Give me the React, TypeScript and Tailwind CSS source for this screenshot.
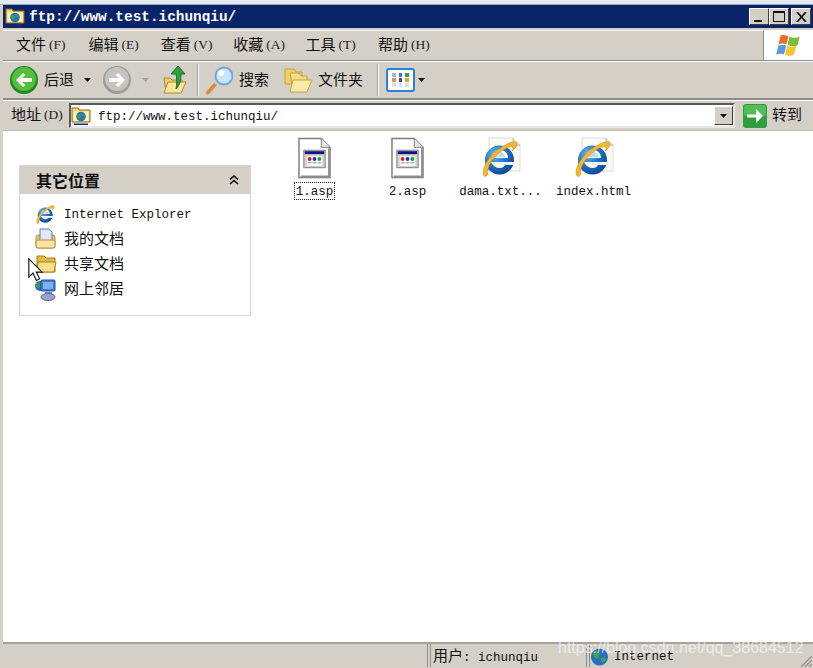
import React from 'react';

const mono = "font-['Liberation_Mono','Noto_Sans_CJK_SC',monospace]";

// latin at 12.5px, CJK at 15px, so each run keeps the old bitmap-font proportions
function Label({ text, className = '' }: { text: string; className?: string }) {
  const parts = text.match(/[\u4e00-\u9fff]+|[^\u4e00-\u9fff]+/g) || [];
  return (
    <span className={`${mono} whitespace-pre leading-none text-[#111] ${className}`}>
      {parts.map((p, i) =>
        /[\u4e00-\u9fff]/.test(p) ? (
          <span key={i} className="text-[15px] font-['Noto_Sans_CJK_SC',sans-serif]">{p}</span>
        ) : (
          <span key={i} className="text-[12.5px]">{p}</span>
        )
      )}
    </span>
  );
}

function Hotkey({ text, hotkey }: { text: string; hotkey: string }) {
  return (
    <span className="inline-flex items-center">
      <Label text={text} />
      <span className="font-['Liberation_Serif',serif] ml-[3px] text-[13.5px] leading-none text-[#222]">({hotkey})</span>
    </span>
  );
}

function FolderGlobe({ size = 20 }: { size?: number }) {
  return (
    <svg width={size} height={size} viewBox="0 0 20 20">
      <path d="M1 2h6l1 2h11v12H1z" fill="#f3d66e" stroke="#8a6d1f" />
      <rect x="2.500" y="5.500" width="15" height="9.500" fill="#fff3b8" />
      <circle cx="10" cy="10.500" r="4.800" fill="#2a6fc4" />
      <path d="M6 9c2-2 4-1 4 1s-2 3-3 2zM10 7c2 0 3 2 3 3l-2 0z" fill="#3aa544" />
      <rect x="3" y="17.500" width="14" height="1.500" fill="#1a2a6a" />
    </svg>
  );
}

function IEIcon({ size = 22, page = false }: { size?: number; page?: boolean }) {
  return (
    <svg width={size} height={size} viewBox="0 0 42 42">
      <defs>
        <radialGradient id="ieBlue" cx="0.35" cy="0.3" r="0.8">
          <stop offset="0" stopColor="#6fbcec" />
          <stop offset="0.5" stopColor="#1f74c4" />
          <stop offset="1" stopColor="#0b3f88" />
        </radialGradient>
      </defs>
      {page && <path d="M9 1h24l7 7v26H9z" fill="#fbfbf4" stroke="#dcdcdc" />}
      {page && <path d="M33 1v7h7" fill="#e4e4ee" stroke="#b5b5c0" />}
      <circle cx="19.500" cy="23" r="14.500" fill="url(#ieBlue)" />
      <path d="M12 21c0-5 3.500-8 8-8s8 3 8 8z" fill="#fff" />
      <path d="M15 20c0-3 2-5 5-5s5 2 5 5z" fill="#b9def5" />
      <path d="M11 25h24c-1 1-1 2-2 3H25c-1 2-3 3-5 3-4 0-7-2-9-6z" fill="#fff" />
      <path d="M14 26h20l-1 2H17z" fill="#e8f4fc" />
      <path d="M4 39C0 33 9 15 29 6c5-2 9-2 8 2-1 3-3 4-5 6 2-3 1-5-3-4C16 15 6 29 8 37c-1 2-3 3-4 2z" fill="#f2b632" stroke="#c98a12" strokeWidth="0.500" />
    </svg>
  );
}

function AspIcon() {
  return (
    <svg width="33" height="42" viewBox="0 0 34 42">
      <path d="M1 1h23l9 9v31H1z" fill="#fff" stroke="#7d7d7d" strokeWidth="1.500" />
      <path d="M24 1v9h9" fill="#e6e6e6" stroke="#7d7d7d" />
      <path d="M31 11h2v30H3v-2h28z" fill="#8f8f8f" />
      <rect x="6" y="13" width="22" height="18" fill="#d4d0c8" stroke="#808080" />
      <rect x="7" y="14" width="20" height="3" fill="#10108a" />
      <rect x="9" y="19" width="16" height="10" fill="#fff" />
      <circle cx="12" cy="22" r="2" fill="#d81e1e" />
      <circle cx="17" cy="22" r="2" fill="#2030d0" />
      <circle cx="22" cy="22" r="2" fill="#18a030" />
      <path d="M10 26h4M15 26h4M20 26h4" stroke="#888" />
    </svg>
  );
}

function ArrowCircle({ disabled = false, flip = false }: { disabled?: boolean; flip?: boolean }) {
  return (
    <svg width="28" height="28" viewBox="0 0 28 28" className={flip ? '-scale-x-100' : ''}>
      <circle cx="14" cy="14" r="14" fill={disabled ? '#9d9c98' : '#1f8a22'} />
      <circle cx="14" cy="13" r="12" fill={disabled ? '#c6c4be' : '#55bd3c'} />
      <path d="M6 14l7-7 2.500 2-3.500 3h10v4H12l3.500 3-2.500 2z" fill="#fff" />
    </svg>
  );
}

function Caret({ color = '#111' }: { color?: string }) {
  return (
    <svg width="7" height="4" viewBox="0 0 7 4">
      <path d="M0 0h7L3.500 4z" fill={color} />
    </svg>
  );
}

function Separator() {
  return <div className="w-[2px] h-[32px] bg-[#a5a29b] border-r border-white" />;
}

function WinButton({ children, className = '' }: { children: React.ReactNode; className?: string }) {
  return (
    <div className={`w-[20px] h-[17px] flex items-center justify-center bg-[#d4d0c8] border border-t-white border-l-white border-r-[#404040] border-b-[#404040] ${className}`}>
      {children}
    </div>
  );
}

const menus = [
  { text: '文件', key: 'F' },
  { text: '编辑', key: 'E' },
  { text: '查看', key: 'V' },
  { text: '收藏', key: 'A' },
  { text: '工具', key: 'T' },
  { text: '帮助', key: 'H' },
];

const places = [
  { name: 'Internet Explorer', icon: <IEIcon size={22} /> },
  {
    name: '我的文档',
    icon: (
      <svg width="22" height="22" viewBox="0 0 22 22">
        <rect x="1" y="7" width="19" height="13" rx="2.500" fill="#eec36a" stroke="#b98c3a" />
        <path d="M5 1h9l3 3v9H5z" fill="#dfeaf8" stroke="#5b7fb8" />
        <rect x="1" y="12" width="19" height="8" rx="2" fill="#f9e2a4" stroke="#b98c3a" />
      </svg>
    ),
  },
  {
    name: '共享文档',
    icon: (
      <svg width="22" height="22" viewBox="0 0 22 22">
        <path d="M2 3h7l2 2h9v14H2z" fill="#e5b93f" stroke="#a4801f" />
        <path d="M3 9h18l-2 10H2z" fill="#f7e08c" stroke="#a4801f" />
      </svg>
    ),
  },
  {
    name: '网上邻居',
    icon: (
      <svg width="22" height="24" viewBox="0 0 22 24">
        <circle cx="5" cy="9" r="5" fill="#2a6cc0" />
        <path d="M1 6c2-1 5 0 5 2s-2 4-5 2z" fill="#36a33c" />
        <rect x="6" y="3" width="14" height="11" rx="1" fill="#3f7fd8" stroke="#28508f" />
        <rect x="8" y="5" width="10" height="7" fill="#79b0ee" />
        <rect x="10" y="15" width="7" height="3" fill="#7a84b8" />
        <ellipse cx="13" cy="20" rx="7" ry="3.500" fill="#9aa4cf" stroke="#5f6a9a" />
      </svg>
    ),
  },
];

const files = [
  { name: '1.asp', asp: true, selected: true },
  { name: '2.asp', asp: true, selected: false },
  { name: 'dama.txt...', asp: false, selected: false },
  { name: 'index.html', asp: false, selected: false },
];

const viewCells = ['#a6b3e0', '#3a78d8', '#2fa04a', '#f08a5c', '#2a4fb0', '#e0a820', '#e6dcd0', '#d8dce8', '#e6e0c8'];

export default function App() {
  return (
    <div className="relative w-[813px] h-[668px] flex flex-col overflow-hidden bg-[#d4d0c8]">
      <div className="h-[5px] bg-[#e4e9ed] border-b border-[#9fa9b3]" />

      {/* title bar */}
      <div className="h-[23px] ml-[3px] flex items-center bg-[#0a246a] pl-[2px] pr-[2px]">
        <FolderGlobe size={20} />
        <span className={`${mono} ml-[4px] pt-[1px] text-[14.4px] leading-none font-bold text-white`}>ftp://www.test.ichunqiu/</span>
        <div className="ml-auto flex">
          <WinButton>
            <div className="w-[8px] h-[2px] mt-[8px] -ml-[2px] bg-[#111]" />
          </WinButton>
          <WinButton>
            <div className="w-[12px] h-[11px] border border-t-2 border-[#111]" />
          </WinButton>
          <WinButton className="ml-[2px]">
            <svg width="11" height="10" viewBox="0 0 11 10">
              <path d="M1 0l9 10M10 0L1 10" stroke="#111" strokeWidth="1.800" fill="none" />
            </svg>
          </WinButton>
        </div>
      </div>

      {/* menu */}
      <div className="h-[31px] ml-[3px] mt-[2px] flex items-stretch border-b border-[#8f8d87]">
        <div className="flex-1 flex items-center pl-[13px] pb-[3px] border-t border-white border-r border-r-[#8f8d87]">
          {menus.map((m) => (
            <div key={m.key} className="w-[72.4px]">
              <Hotkey text={m.text} hotkey={m.key} />
            </div>
          ))}
        </div>
        <div className="w-[49px] bg-white flex items-center justify-center">
          <svg width="27" height="27" viewBox="0 0 24 24">
            <path d="M5 3c3-1 5 0 7 1l-2 7c-2-1-4-1-7 0z" fill="#ee6a2c" />
            <path d="M13 4c2 1 5 2 9 0l-2 8c-3 1-6 1-9-1z" fill="#7dbb3c" />
            <path d="M3 12c3-1 5-1 7 0l-2 8c-2-1-4-1-7 0z" fill="#5b9be0" />
            <path d="M11 12c2 1 5 2 8 0l-2 8c-3 2-6 1-8 0z" fill="#f3c52f" />
          </svg>
        </div>
      </div>

      {/* toolbar */}
      <div className="h-[39px] ml-[3px] flex items-center border-t border-white border-b-2 border-b-[#8f8d87] pl-[7px]">
        <ArrowCircle />
        <Label text="后退" className="ml-[6px]" />
        <span className="ml-[10px] flex"><Caret /></span>
        <span className="ml-[12px] flex"><ArrowCircle disabled flip /></span>
        <span className="ml-[11px] flex"><Caret color="#a5a29b" /></span>
        <svg width="24" height="30" viewBox="0 0 24 30" className="ml-[14px]">
          <path d="M1 13h6l2 2h10v12H3z" fill="#f0cf6a" stroke="#a98a2b" />
          <path d="M5 17h18l-5 11H1z" fill="#fae69b" stroke="#a98a2b" />
          <path d="M15 1l7 8h-4c0 6-1 11-5 15 1-5 1-10 0-15H8z" fill="#2f9e3c" stroke="#19702a" />
        </svg>
        <div className="ml-[10px]"><Separator /></div>
        <svg width="28" height="30" viewBox="0 0 28 30" className="ml-[6px]">
          <path d="M1 27l8-9 3 2-8 9c-2 1-4 0-3-2z" fill="#d88a3c" />
          <circle cx="19" cy="11" r="8.500" fill="#c9e5fb" stroke="#6fa6da" strokeWidth="1.800" />
          <circle cx="16" cy="8" r="3" fill="#fff" />
        </svg>
        <Label text="搜索" className="ml-[6px]" />
        <svg width="29" height="26" viewBox="0 0 29 26" className="ml-[15px]">
          <path d="M1 2h9l2 3h6v12H1z" fill="#f0cf6a" stroke="#c4a440" />
          <path d="M6 6h9l2 3h6v8l-14 6z" fill="#f5db85" stroke="#c4a440" />
          <path d="M9 13h19l-5 12H6z" fill="#fbeaa6" stroke="#c4a440" />
        </svg>
        <Label text="文件夹" className="ml-[5px]" />
        <div className="ml-[14px]"><Separator /></div>
        <div className="ml-[7px] w-[29px] h-[24px] rounded-[3px] border-2 border-[#2a7fd6] bg-white grid grid-cols-3 gap-x-[3px] gap-y-[1px] px-[4px] py-[3px]">
          {viewCells.map((c, i) => (
            <div key={i} className="h-[4px]" style={{ backgroundColor: c }} />
          ))}
        </div>
        <span className="ml-[3px] flex"><Caret /></span>
      </div>

      {/* address */}
      <div className="h-[30px] ml-[3px] flex items-center border-t border-white pl-[8px] pr-[10px]">
        <div className="w-[58px] pb-[3px]">
          <Hotkey text="地址" hotkey="D" />
        </div>
        <div className="w-[666px] h-[25px] bg-white flex items-center border-2 border-t-[#5a5a5a] border-l-[#5a5a5a] border-r-[#e8e6e1] border-b-[#e8e6e1]">
          <FolderGlobe size={20} />
          <Label text="ftp://www.test.ichunqiu/" className="ml-[7px] pt-[1px]" />
          <div className="ml-auto w-[19px] h-[19px] flex items-center justify-center bg-[#d4d0c8] border border-t-white border-l-white border-r-[#404040] border-b-[#404040]">
            <Caret />
          </div>
        </div>
        <svg width="24" height="24" viewBox="0 0 24 24" className="ml-[8px]">
          <rect width="24" height="24" rx="3" fill="#2f9e3c" />
          <rect x="1" y="1" width="22" height="11" rx="2" fill="#52bc55" />
          <path d="M4 10.500h9V5l7 7-7 7v-5.500H4z" fill="#fff" />
        </svg>
        <Label text="转到" className="ml-[5px] pb-[1px]" />
      </div>

      {/* content */}
      <div className="h-[512px] ml-[3px] flex bg-white border-t border-[#bdbab3] pl-[16px] pt-[34px]">
        <div className="w-[232px] h-[151px] flex flex-col border border-[#d9d6cf]">
          <div className="h-[28px] flex items-center justify-between bg-[#d4d0c8] pl-[16px] pr-[11px] pb-[1px]">
            <span className="font-['Noto_Sans_CJK_SC',sans-serif] text-[16px] leading-none font-bold text-[#111]">其它位置</span>
            <svg width="10" height="10" viewBox="0 0 10 10">
              <path d="M1 4.500l4-3.500 4 3.500M1 9l4-3.500L9 9" stroke="#111" strokeWidth="1.600" fill="none" />
            </svg>
          </div>
          <div className="flex flex-col pt-[7px] pl-[15px]">
            {places.map((p) => (
              <div key={p.name} className="h-[25px] flex items-center gap-[7px]">
                <div className="w-[22px] flex">{p.icon}</div>
                <Label text={p.name} />
              </div>
            ))}
          </div>
        </div>

        <div className="flex ml-[17px] -mt-[29px] h-[80px]">
          {files.map((f) => (
            <div key={f.name} className="w-[93px] flex flex-col items-center">
              <div className="h-[43px] flex items-end justify-center">{f.asp ? <AspIcon /> : <IEIcon size={42} page />}</div>
              <div className={`mt-[3px] h-[18px] px-[1px] flex items-center ${f.selected ? 'border border-dotted border-[#222]' : 'border border-transparent'}`}>
                <Label text={f.name} />
              </div>
            </div>
          ))}
        </div>
      </div>

      {/* status bar */}
      <div className="flex-1 ml-[3px] flex border-t-2 border-t-[#a5a29b] pb-[1px] pr-[3px]">
        <div className="w-[425px] border-r border-[#8f8d87]" />
        <div className="w-[157px] ml-[2px] flex items-center border-l border-r border-[#8f8d87] pl-[2px]">
          <Label text="用户: ichunqiu" />
        </div>
        <div className="flex-1 ml-[2px] flex items-center border-l border-[#8f8d87]">
          <svg width="19" height="20" viewBox="0 0 20 20">
            <circle cx="10" cy="11" r="9" fill="#2a6fc4" />
            <path d="M4 6c3-2 6-1 6 2s-2 6-4 5-3-4-2-7zM12 12c3-1 5 0 5 1s-3 5-4 4-2-4-1-5z" fill="#3aa544" />
          </svg>
          <Label text="Internet" className="ml-[5px]" />
        </div>
      </div>

      {/* resize grip */}
      <svg width="14" height="14" viewBox="0 0 14 14" className="absolute right-0 bottom-0">
        <path d="M13 2L2 13M13 6l-7 7M13 10l-3 3" stroke="#8f8d87" strokeWidth="1.200" />
      </svg>

      {/* watermark */}
      <span className="absolute left-[558px] top-[639px] font-['Liberation_Sans',sans-serif] text-[16px] leading-[18px] text-white/60 whitespace-nowrap">
        https://blog.csdn.net/qq_38684512
      </span>

      {/* mouse pointer */}
      <svg width="20" height="27" viewBox="0 0 24 30" className="absolute left-[28px] top-[257px]">
        <path d="M1 1v22l5-5 4 9 4-2-4-8h7z" fill="#fff" stroke="#111" strokeWidth="1.400" />
      </svg>
    </div>
  );
}
